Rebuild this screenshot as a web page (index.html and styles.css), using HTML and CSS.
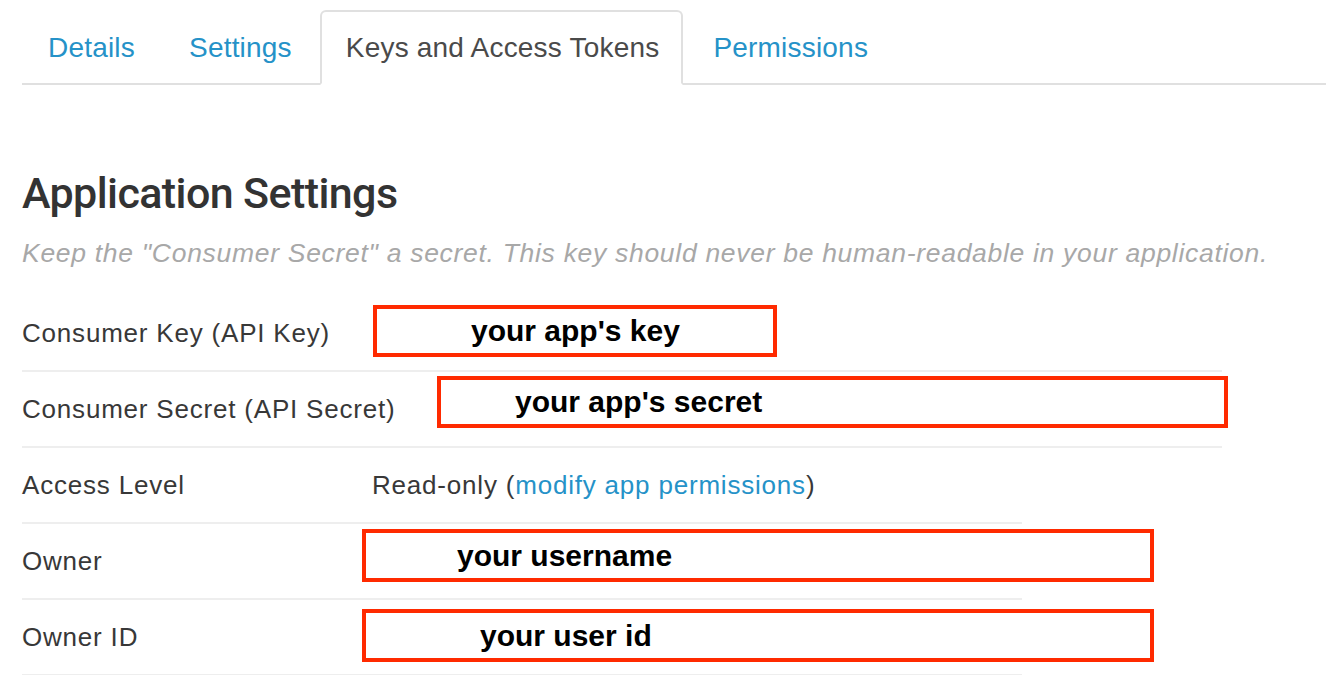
FILE: index.html
```html
<!DOCTYPE html>
<html lang="en">
<head>
<meta charset="utf-8">
<title>Keys and Access Tokens</title>
<link rel="stylesheet" href="styles.css">
</head>
<body>
<div class="page">
  <nav class="tabs">
    <a class="tab" href="#">Details</a>
    <a class="tab" href="#">Settings</a>
    <a class="tab active" href="#">Keys and Access Tokens</a>
    <a class="tab" href="#">Permissions</a>
  </nav>

  <section class="app-settings">
    <h2 class="heading">Application Settings</h2>
    <p class="hint">Keep the "Consumer Secret" a secret. This key should never be human-readable in your application.</p>

    <div class="table">
      <div class="row wide">
        <div class="label">Consumer Key (API Key)</div>
        <div class="value"></div>
        <div class="note note-key"><span>your app's key</span></div>
      </div>
      <div class="row wide">
        <div class="label">Consumer Secret (API Secret)</div>
        <div class="value"></div>
        <div class="note note-secret"><span>your app's secret</span></div>
      </div>
      <div class="row narrow">
        <div class="label">Access Level</div>
        <div class="value">Read-only (<a href="#" class="link">modify app permissions</a>)</div>
      </div>
      <div class="row narrow">
        <div class="label">Owner</div>
        <div class="value"></div>
        <div class="note note-user"><span>your username</span></div>
      </div>
      <div class="row narrow">
        <div class="label">Owner ID</div>
        <div class="value"></div>
        <div class="note note-id"><span>your user id</span></div>
      </div>
    </div>
  </section>
</div>
</body>
</html>
```

FILE: styles.css
```css
* { box-sizing: border-box; }

html, body {
  margin: 0;
  padding: 0;
  background: #ffffff;
}

body {
  font-family: "Liberation Sans", Arial, sans-serif;
  color: #333333;
  overflow: hidden;
}

.page {
  padding-left: 22px;
}

/* Tabs */
.tabs {
  display: flex;
  align-items: flex-end;
  height: 85px;
  padding-top: 10px;
  border-bottom: 2px solid #e0e0e0;
}

.tab {
  display: block;
  height: 75px;
  margin-bottom: -2px;
  padding: 0 26px 0 24px;
  font-size: 28px;
  line-height: 71px;
  letter-spacing: 0.2px;
  color: #2592c8;
  text-decoration: none;
  border: 2px solid transparent;
  border-radius: 6px 6px 0 0;
  white-space: nowrap;
}

.tab.active {
  color: #4a4a4a;
  border-color: #e0e0e0;
  border-bottom-color: #ffffff;
  background: #ffffff;
  padding: 0 22px 0 24px;
  margin: 0 4px -2px 0;
}

/* Section */
.app-settings {
  padding-top: 84px;
}

.heading {
  margin: 0;
  font-family: "Roboto", "Liberation Sans", sans-serif;
  font-weight: 500;
  font-size: 43px;
  line-height: 48px;
  letter-spacing: -0.6px;
  color: #333333;
}

.hint {
  margin: 21px 0 0;
  font-size: 26.5px;
  line-height: 30px;
  font-style: italic;
  letter-spacing: 0.7px;
  color: #a8a8a8;
}

.table {
  margin-top: 28px;
}

.row {
  position: relative;
  display: flex;
  align-items: center;
  height: 76px;
  border-bottom: 2px solid #eeeeee;
  font-size: 26px;
  letter-spacing: 0.8px;
  color: #383838;
}

.row.wide { width: 1200px; }
.row.narrow { width: 1000px; }

.label {
  width: 350px;
  flex: none;
  white-space: nowrap;
}

.value {
  flex: 1;
  white-space: nowrap;
}

.link {
  color: #2592c8;
  text-decoration: none;
}

/* Red annotation boxes laid over the values */
.note {
  position: absolute;
  display: flex;
  align-items: center;
  height: 52px;
  border: 4px solid #ff2a00;
  background: #ffffff;
  font-weight: bold;
  font-size: 30px;
  color: #000000;
  letter-spacing: 0;
  white-space: nowrap;
}

.note-key    { left: 351px; top: 9px;  width: 404px; padding-left: 94px; }
.note-secret { left: 415px; top: 4px;  width: 791px; padding-left: 74px; }
.note-user   { left: 340px; top: 5px;  width: 792px; height: 53px; padding-left: 91px; }
.note-id     { left: 340px; top: 9px;  width: 792px; height: 53px; padding-left: 114px; }
```
